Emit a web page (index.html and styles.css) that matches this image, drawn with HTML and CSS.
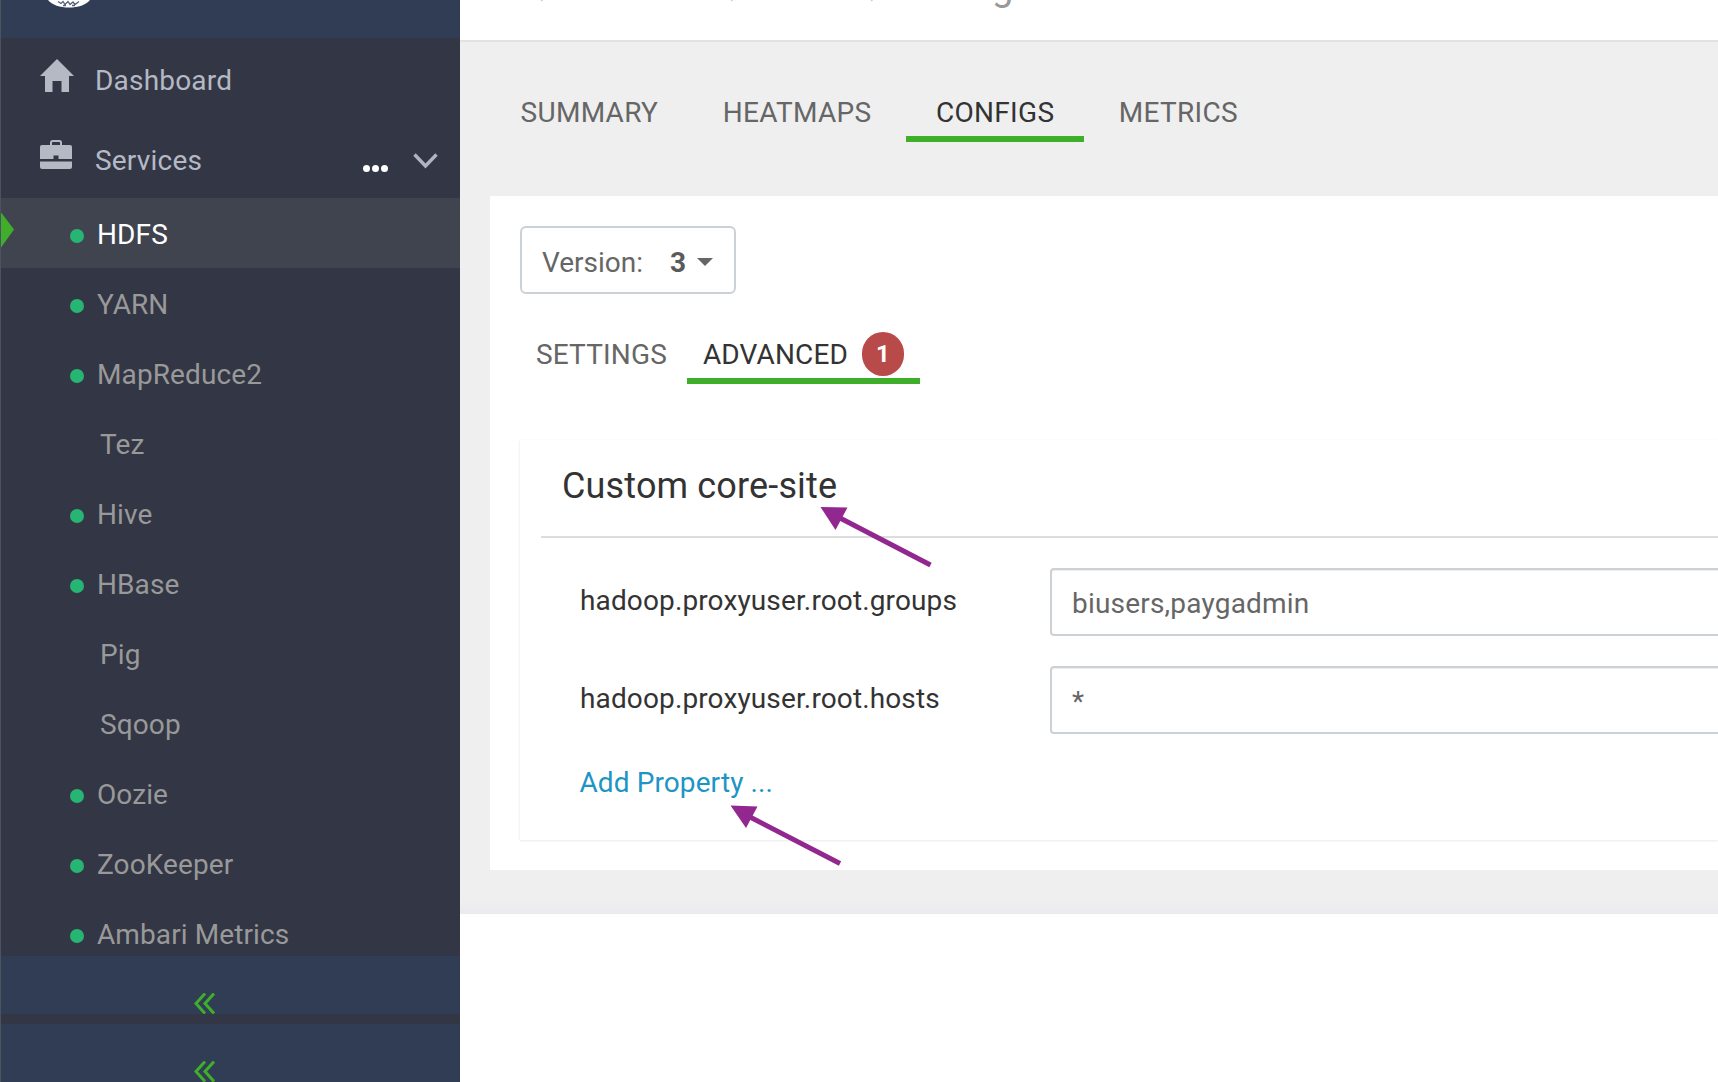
FILE: index.html
```html
<!DOCTYPE html>
<html lang="en">
<head>
<meta charset="utf-8">
<title>HDFS Configs</title>
<link rel="stylesheet" href="styles.css">
</head>
<body>
<div class="app">
  <aside class="sidebar">
    <div class="brand">
      <svg class="logo" viewBox="0 0 42 8" width="42" height="8">
        <path d="M0 0H42C38 5 30 7.6 21 7.6S4 5 0 0Z" fill="#fff"/>
        <path d="M10 1.500l3 2 2-2 2 3 3-3 2 3 3-2.500 2 2.500 4-3M15 5.500h3M24 5.500h3" fill="none" stroke="#56607a" stroke-width="1.300"/>
      </svg>
    </div>
    <nav class="menu">
      <a class="menu-item">
        <svg class="menu-icon" viewBox="0 0 34 33" width="34" height="33"><path d="M17 0 34 17H29V33H21.500V22H12.500V33H5V17H0Z" fill="#b5b9c3"/></svg>
        <span class="menu-label">Dashboard</span>
      </a>
      <a class="menu-item">
        <svg class="menu-icon case" viewBox="0 0 32 29" width="32" height="29">
          <path d="M11 6V2.500C11 1.600 11.700 1 12.500 1H19.500C20.300 1 21 1.600 21 2.500V6" fill="none" stroke="#b5b9c3" stroke-width="2"/>
          <path d="M2 5H30A2 2 0 0 1 32 7V19H0V7A2 2 0 0 1 2 5Z" fill="#b5b9c3"/>
          <path d="M0 21.500H32V27A2 2 0 0 1 30 29H2A2 2 0 0 1 0 27Z" fill="#b5b9c3"/>
          <rect x="13.500" y="15.500" width="5" height="4.500" fill="#333645"/>
        </svg>
        <span class="menu-label">Services</span>
        <span class="more"><i></i><i></i><i></i></span>
        <svg class="caret" viewBox="0 0 25 16" width="25" height="16"><path d="M1.500 1.500 12.500 13 23.500 1.500" fill="none" stroke="#b0b4c0" stroke-width="3.400"/></svg>
      </a>
    </nav>
    <ul class="services">
      <li class="service active">
        <svg class="marker" viewBox="0 0 14 38" width="14" height="38"><path d="M0 0 14 18.500 0 38Z" fill="#3fae2a"/></svg>
        <i class="dot"></i>HDFS
      </li>
      <li class="service"><i class="dot"></i>YARN</li>
      <li class="service"><i class="dot"></i>MapReduce2</li>
      <li class="service plain">Tez</li>
      <li class="service"><i class="dot"></i>Hive</li>
      <li class="service"><i class="dot"></i>HBase</li>
      <li class="service plain">Pig</li>
      <li class="service plain">Sqoop</li>
      <li class="service"><i class="dot"></i>Oozie</li>
      <li class="service"><i class="dot"></i>ZooKeeper</li>
      <li class="service"><i class="dot"></i>Ambari Metrics</li>
    </ul>
    <div class="collapse">
      <svg viewBox="0 0 21 21" width="21" height="21"><path d="M11 .5 2 10.500 11 20.500M20 .5 11 10.500 20 20.500" fill="none" stroke="#3fae2a" stroke-width="3"/></svg>
    </div>
    <div class="collapse second">
      <svg viewBox="0 0 21 21" width="21" height="21"><path d="M11 .5 2 10.500 11 20.500M20 .5 11 10.500 20 20.500" fill="none" stroke="#3fae2a" stroke-width="3"/></svg>
    </div>
  </aside>

  <main class="main">
    <header class="page-head">
      <div class="page-title"><span class="tick w1">,</span><span class="tick w2">,</span><span class="tick w3">,</span><span>g</span></div>
    </header>
    <div class="content">
      <div class="tabs">
        <a class="tab">SUMMARY</a>
        <a class="tab">HEATMAPS</a>
        <a class="tab on">CONFIGS</a>
        <a class="tab">METRICS</a>
      </div>
      <section class="panel">
        <button class="version">Version:<b>3</b><i class="down"></i></button>
        <div class="subtabs">
          <a class="subtab">SETTINGS</a>
          <a class="subtab on">ADVANCED<span class="badge">1</span></a>
        </div>
        <div class="card">
          <h2 class="card-title">Custom core-site</h2>
          <div class="prop">
            <label class="prop-name">hadoop.proxyuser.root.groups</label>
            <input class="prop-value" value="biusers,paygadmin" readonly>
          </div>
          <div class="prop">
            <label class="prop-name">hadoop.proxyuser.root.hosts</label>
            <input class="prop-value" value="*" readonly>
          </div>
          <a class="add">Add Property ...</a>
        </div>
      </section>
    </div>
  </main>

  <svg class="annotations" viewBox="0 0 1718 1082" width="1718" height="1082">
    <path d="M930.500 565 840 518" fill="none" stroke="#92278f" stroke-width="5"/>
    <path d="M820.500 507 847.500 507.500 835.500 530Z" fill="#92278f"/>
    <path d="M840 863.500 750 817" fill="none" stroke="#92278f" stroke-width="5"/>
    <path d="M730.500 805.500 757.500 806.500 746 828Z" fill="#92278f"/>
  </svg>
</div>
</body>
</html>
```

FILE: styles.css
```css
* { box-sizing: border-box; }
html, body { margin: 0; height: 100%; background: #fff; }
body { font-family: Roboto, "Liberation Sans", sans-serif; font-size: 28px; letter-spacing: .2px; overflow: hidden; }
.app { position: relative; display: flex; width: 1718px; height: 1082px; overflow: hidden; }

.sidebar { flex: 0 0 460px; display: flex; flex-direction: column; height: 1082px; background: #333645; border-left: 1px solid #4b5262; overflow: hidden; }
.brand { flex: 0 0 38px; background: #313d55; padding-left: 47px; }
.logo { display: block; }
.menu-item { display: flex; align-items: center; height: 80px; padding-left: 39px; color: #b5b9c3; }
.menu-label { flex: 1; margin: 4px 0 0 21px; }
.menu-icon { flex: 0 0 34px; margin-bottom: 6px; }
.menu-icon.case { flex-basis: 32px; margin: 0 2px 7px 0; }
.more { display: flex; gap: 2px; margin: 20px 25px 0 0; }
.more i { width: 7px; height: 7px; border-radius: 50%; background: #fff; }
.caret { margin: 6px 22px 0 0; }

.services { flex: 0 0 758px; margin: 0; padding: 0; list-style: none; letter-spacing: .1px; overflow: hidden; }
.service { position: relative; display: flex; align-items: center; height: 70px; padding: 2px 0 0 69px; color: #999; }
.service.plain { padding-left: 99px; }
.service.active { background: #40444f; color: #fff; }
.dot { flex: 0 0 14px; width: 14px; height: 14px; margin: 4px 13px 0 0; border-radius: 50%; background: #27b574; }
.marker { position: absolute; left: -1px; top: 13px; }

.collapse { flex: 0 0 58px; display: flex; justify-content: center; align-items: flex-end; background: #313d55; overflow: hidden; padding-right: 53px; }
.collapse.second { margin-top: 10px; }
.collapse svg { display: block; }

.main { flex: 1; min-width: 0; display: flex; flex-direction: column; }
.page-head { flex: 0 0 42px; background: #fff; border-bottom: 2px solid #e2e2e2; overflow: hidden; }
.page-title { display: flex; align-items: baseline; height: 36px; margin-top: -31px; padding-left: 81px; color: #999; font-size: 38px; line-height: 36px; }
.tick { font-size: 9px; }
.w1 { width: 190px; }
.w2 { width: 140px; }
.w3 { width: 121px; }

.content { height: 872px; padding: 50px 0 0 30px; background: linear-gradient(#efefef 0, #efefef 856px, #ebebef 872px); }
.tabs { display: flex; gap: 4.5px; height: 104px; margin-left: .5px; color: #666; letter-spacing: .3px; }
.tab { height: 50px; padding: 0 30px; line-height: 42px; }
.tab.on { color: #333; border-bottom: 6px solid #3fae2a; }
.panel { height: 674px; padding: 30px 0 0 30px; background: #fff; overflow: hidden; }
.version { display: flex; align-items: center; width: 216px; height: 68px; padding: 4px 0 0 20px; border: 2px solid #ccd1d6; border-radius: 6px; background: #fff; color: #666; font: inherit; letter-spacing: 0; }
.version b { margin-left: 27px; font-weight: 700; color: #5a5a5a; }
.down { width: 0; height: 0; margin-left: 11px; margin-top: 0; border: 8px solid transparent; border-top-color: #666; border-bottom: 0; }
.subtabs { display: flex; gap: 4px; margin-top: 40px; color: #666; letter-spacing: .15px; }
.subtab { display: flex; height: 50px; padding: 0 16px; line-height: 42px; }
.subtab.on { color: #333; border-bottom: 6px solid #3fae2a; }
.badge { display: flex; align-items: center; justify-content: center; width: 42px; height: 44px; margin: -2px 0 0 14px; border-radius: 21px; background: #b94a4a; color: #fff; font-size: 24px; font-weight: 700; }

.card { height: 400px; margin-top: 56px; background: #fff; box-shadow: 0 1px 2px rgba(0, 0, 0, .08), -1px 0 2px rgba(0, 0, 0, .03); }
.card-title { height: 98px; margin: 0 0 30px 21px; padding: 26px 0 0 21px; border-bottom: 2px solid #ddd; color: #333; font-size: 36px; font-weight: 400; letter-spacing: .15px; line-height: 40px; }
.prop { display: flex; align-items: center; height: 68px; margin-bottom: 30px; padding-left: 60px; }
.prop-name { flex: 0 0 470px; margin-top: -4px; color: #333; letter-spacing: .13px; }
.prop-value { flex: 1; min-width: 0; height: 68px; margin-right: -10px; padding: 2px 0 0 20px; border: 2px solid #ccd1d6; border-radius: 4px; box-shadow: inset 0 1px 1px rgba(0, 0, 0, .075); color: #666; font: inherit; letter-spacing: .2px; outline: 0; }
.add { display: block; margin: -1px 0 0 59.5px; color: #1d95c5; letter-spacing: .1px; line-height: 40px; }

.annotations { position: absolute; left: 0; top: 0; pointer-events: none; }
```
